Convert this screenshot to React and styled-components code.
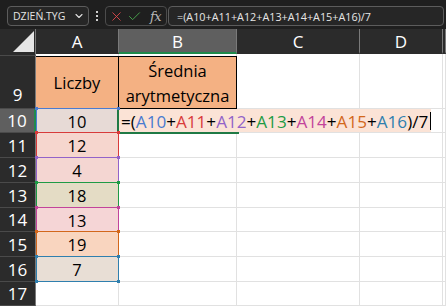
import React from 'react';
import styled, { createGlobalStyle } from 'styled-components';
import { ChevronDown, X, Check } from 'lucide-react';

const GlobalStyle = createGlobalStyle`
  html, body {
    margin: 0;
    padding: 0;
    background: #1f1f1f;
    overflow: hidden;
  }
  body {
    font-family: 'Open Sans', 'Liberation Sans', sans-serif;
  }
`;

const Page = styled.div`
  width: 446px;
  height: 306px;
  overflow: hidden;
  background: #1f1f1f;
  display: flex;
  flex-direction: column;
`;

const Toolbar = styled.div`
  height: 30px;
  box-sizing: border-box;
  display: flex;
  align-items: flex-start;
  padding: 6px 2px 0 7px;
`;

const NameBox = styled.div`
  width: 82px;
  height: 20px;
  box-sizing: border-box;
  border: 1px solid #5c5c5c;
  border-radius: 4px;
  background: #262626;
  color: #e4e4e4;
  font-size: 10.5px;
  display: flex;
  align-items: center;
  justify-content: space-between;
  padding: 0 3px 0 5px;
`;

const Dots = styled.div`
  width: 16px;
  height: 20px;
  display: flex;
  flex-direction: column;
  align-items: center;
  justify-content: center;
  gap: 2px;
  span {
    width: 2px;
    height: 2px;
    background: #cfcfcf;
  }
`;

const FxGroup = styled.div`
  width: 62px;
  height: 20px;
  box-sizing: border-box;
  border: 1px solid #4c4c4c;
  border-radius: 4px;
  display: flex;
  align-items: center;
  gap: 3px;
  padding-left: 3px;
  margin-right: 1px;
`;

const Fx = styled.span`
  font-family: 'DejaVu Serif', 'Liberation Serif', serif;
  font-style: italic;
  font-size: 13px;
  color: #b8b8b8;
  margin-left: 5px;
  letter-spacing: -0.5px;
`;

const FormulaInput = styled.div`
  flex: 1;
  height: 20px;
  box-sizing: border-box;
  border: 1px solid #5c5c5c;
  border-radius: 4px;
  background: #262626;
  color: #e6e6e6;
  font-size: 10.8px;
  display: flex;
  align-items: center;
  padding-left: 8px;
  white-space: nowrap;
`;

const Sheet = styled.div`
  display: grid;
  grid-template-columns: 36px 83px 118px 123px 83px 3px;
  grid-template-rows: 25px 2px 53px 24px 25px 25px 25px 24px 25px 25px 24px;
  background: #fff;
  font-size: 16.5px;
  color: #000;
`;

const Corner = styled.div`
  background: #2b2b2b;
  border-right: 1px solid #7a7a7a;
  display: flex;
  justify-content: flex-end;
  align-items: flex-end;
  padding: 0 1px 2px 0;
  &::after {
    content: '';
    width: 21px;
    height: 21px;
    background: #e6e6e6;
    clip-path: polygon(100% 0, 100% 100%, 0 100%);
  }
`;

const ColHeader = styled.div`
  box-sizing: border-box;
  background: ${p => (p.$selected ? '#5f5f5f' : '#2b2b2b')};
  border-right: 1px solid #7a7a7a;
  border-bottom: 2px solid ${p => (p.$selected ? '#1f8a4c' : '#2b2b2b')};
  color: #fff;
  font-size: 17px;
  display: flex;
  align-items: center;
  justify-content: center;
  padding-top: 2px;
`;

const RowHeader = styled.div`
  box-sizing: border-box;
  background: ${p => (p.$selected ? '#5f5f5f' : '#2b2b2b')};
  border-right: ${p => (p.$selected ? '2px solid #1f8a4c' : '1px solid #7a7a7a')};
  border-bottom: 1px solid #4a4a4a;
  color: #fff;
  font-size: 17px;
  display: flex;
  justify-content: center;
  align-items: ${p => (p.$bottom ? 'flex-end' : 'center')};
  padding-bottom: ${p => (p.$bottom ? '2px' : '0')};
`;

const Cell = styled.div`
  box-sizing: border-box;
  background: #fff;
  border-right: 1px solid #e1e1e1;
  border-bottom: ${p => (p.$noBottom ? 'none' : '1px solid #e1e1e1')};
`;

const HeadCell = styled.div`
  box-sizing: border-box;
  background: #f4b183;
  border-right: 1px solid #000;
  border-bottom: 1px solid #000;
  box-shadow: inset 0 1px 0 #000;
  display: flex;
  flex-direction: column;
  align-items: center;
  justify-content: center;
  line-height: 25px;
  padding-top: 1px;
`;

const RefCell = styled.div`
  position: relative;
  box-sizing: border-box;
  background: ${p => p.$fill};
  border-right: 1px solid #e1e1e1;
  border-bottom: 1px solid #e1e1e1;
  display: flex;
  align-items: center;
  justify-content: center;
  padding-top: 1px;
  &::before {
    content: '';
    position: absolute;
    top: -1px;
    left: 0;
    right: -1px;
    bottom: -1px;
    border: 1px solid ${p => p.$c};
  }
`;

const Handle = styled.span`
  position: absolute;
  width: 3px;
  height: 3px;
  background: ${p => p.$c};
  ${p => (p.$top ? 'top: -2px;' : 'bottom: -2px;')}
  ${p => (p.$left ? 'left: -1px;' : 'right: -2px;')}
  z-index: 2;
`;

const EditCell = styled.div`
  grid-column: span 3;
  position: relative;
  box-sizing: border-box;
  background: #fff;
  border-right: 1px solid #e1e1e1;
  border-bottom: 1px solid #e1e1e1;
  overflow: visible;
`;

const EditText = styled.div`
  width: 312px;
  height: 100%;
  box-sizing: border-box;
  background: #fbe3d6;
  display: flex;
  align-items: center;
  padding: 1px 0 0 2px;
  font-size: 17.1px;
  white-space: nowrap;
`;

const Ref = styled.span`
  color: ${p => p.$c};
`;

const Caret = styled.span`
  flex: none;
  width: 1px;
  height: 18px;
  background: #000;
  margin-left: 2px;
`;

const ActiveFrame = styled.span`
  position: absolute;
  left: -2px;
  top: 0;
  width: 120px;
  bottom: -2px;
  border-left: 2px solid #1f7a45;
  border-bottom: 2px solid #1f7a45;
  pointer-events: none;
`;

const refs = [
  { row: 10, value: 10, c: '#4a7bd0', fill: '#e7dad6' },
  { row: 11, value: 12, c: '#d83b3b', fill: '#f6d6ce' },
  { row: 12, value: 4, c: '#9263c9', fill: '#f4d6d2' },
  { row: 13, value: 18, c: '#1e9b45', fill: '#e4dcc5' },
  { row: 14, value: 13, c: '#c2449b', fill: '#f5d5d6' },
  { row: 15, value: 19, c: '#d2671b', fill: '#f9d5bf' },
  { row: 16, value: 7, c: '#2f7fae', fill: '#e8ded5' },
];

const RefBox = ({ r, children }) => (
  <RefCell $c={r.c} $fill={r.fill}>
    {children}
    <Handle $c={r.c} $top $left />
    <Handle $c={r.c} $top />
    <Handle $c={r.c} $left />
    <Handle $c={r.c} />
  </RefCell>
);

const Formula = () => (
  <>
    =(
    {refs.map((r, i) => (
      <React.Fragment key={r.row}>
        {i > 0 && '+'}
        <Ref $c={r.c}>A{r.row}</Ref>
      </React.Fragment>
    ))}
    )/7
  </>
);

export default function App() {
  return (
    <Page>
      <GlobalStyle />
      <Toolbar>
        <NameBox>
          DZIEŃ.TYG
          <ChevronDown size={12} strokeWidth={2.2} color="#e0e0e0" />
        </NameBox>
        <Dots><span /><span /><span /></Dots>
        <FxGroup>
          <X size={15} strokeWidth={1.4} color="#e5484d" />
          <Check size={15} strokeWidth={1.4} color="#4caf50" />
          <Fx>fx</Fx>
        </FxGroup>
        <FormulaInput>=(A10+A11+A12+A13+A14+A15+A16)/7</FormulaInput>
      </Toolbar>

      <Sheet>
        <Corner />
        <ColHeader>A</ColHeader>
        <ColHeader $selected>B</ColHeader>
        <ColHeader>C</ColHeader>
        <ColHeader>D</ColHeader>
        <ColHeader />

        <RowHeader />
        <Cell $noBottom />
        <Cell $noBottom />
        <Cell $noBottom />
        <Cell $noBottom />
        <Cell $noBottom />

        <RowHeader $bottom>9</RowHeader>
        <HeadCell>Liczby</HeadCell>
        <HeadCell>
          <span>Średnia</span>
          <span>arytmetyczna</span>
        </HeadCell>
        <Cell />
        <Cell />
        <Cell />

        {refs.map(r => (
          <React.Fragment key={r.row}>
            <RowHeader $selected={r.row === 10}>{r.row}</RowHeader>
            <RefBox r={r}>{r.value}</RefBox>
            {r.row === 10 ? (
              <EditCell>
                <EditText>
                  <Formula />
                  <Caret />
                </EditText>
                <ActiveFrame />
              </EditCell>
            ) : (
              <>
                <Cell />
                <Cell />
                <Cell />
              </>
            )}
            <Cell />
          </React.Fragment>
        ))}

        <RowHeader>17</RowHeader>
        <Cell />
        <Cell />
        <Cell />
        <Cell />
        <Cell />
      </Sheet>
    </Page>
  );
}
